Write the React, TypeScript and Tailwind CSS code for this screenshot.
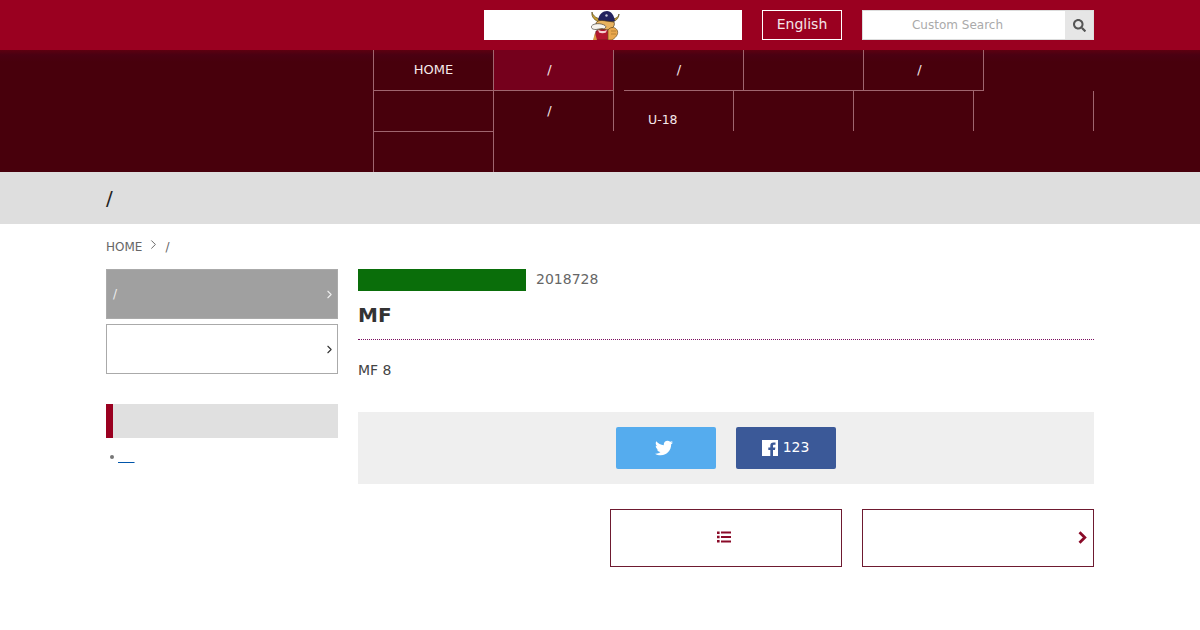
import { FaSearch, FaTwitter } from "react-icons/fa";
import { ChevronRight } from "lucide-react";

function Mascot() {
  return (
    <svg width="29" height="29" viewBox="0 0 29 29" className="block">
      <path d="M1 1 C2 5 6 8 11 8 L20 8 C24 8 27 7 28 3 C28 6 26 10 21 11 L9 11 C4 10 0 6 1 1Z" fill="#c9a233" stroke="#5a4a1a" strokeWidth="0.7" />
      <path d="M7 9 C8 3 12 0 16 0 C20 0 23 4 24 10 C19 12 12 12 7 9Z" fill="#23235f" />
      <circle cx="15.5" cy="4.5" r="1.2" fill="#c8c8d8" />
      <path d="M5 13 C5 9 11 9 15 10 L23 11 C24 13 23 16 21 17 L16 19 L8 19 C5 18 4 15 5 13Z" fill="#e9b35f" stroke="#4a3518" strokeWidth="0.7" />
      <path d="M0.5 15 C3 12 10 12 14 14.5 C16 16 14 18.5 11 17.5 L5 18.5 C1 18.5 0 17 0.5 15Z" fill="#f7f4ee" stroke="#45403a" strokeWidth="0.7" />
      <path d="M3 29 L5 20 C9 18 15 18 18 20 L18 29Z" fill="#b3172f" stroke="#4a1a18" strokeWidth="0.5" />
      <path d="M7 18.5 C10 20.5 14 20.5 16 18.5 L15 21.5 C13 22.5 10 22.5 8 21.5Z" fill="#f6d0d0" />
      <path d="M17 19 C20 15 25 16 26.5 20 C27.5 24 24 27 21 29 L17 29Z" fill="#eaa94e" stroke="#6a4a1a" strokeWidth="0.7" />
      <path d="M20 20 L25 20 M20 23 L25 23" stroke="#a8742c" strokeWidth="0.7" />
      <path d="M2 29 L4 22 L6 29Z" fill="#d99a45" />
    </svg>
  );
}

const line = "border-[#a0656f]";

export default function App() {
  return (
    <div className="min-h-[630px] bg-white text-[14px] text-[#333] font-['DejaVu_Sans',sans-serif]">
      <header className="flex h-[50px] items-center justify-end gap-5 bg-[#9a0020] pr-[106px]">
        <div className="flex h-[30px] w-[258px] justify-center bg-white">
          <div className="mr-[15px] mt-[1px]"><Mascot /></div>
        </div>
        <div className="flex h-[30px] w-20 items-center justify-center border border-white pb-[2px] text-[14px] text-[#f5e5e8]">English</div>
        <div className="flex h-[30px] w-[232px] border border-[#dddddd] bg-white">
          <div className="flex-1 pr-[13px] text-center text-[12px] leading-[28px] text-[#aaaaaa]">Custom Search</div>
          <div className="flex w-[28px] items-center justify-center bg-[#e6e6e6] text-[#555555]">
            <FaSearch size={13} />
          </div>
        </div>
      </header>

      <nav className="h-[122px] bg-[linear-gradient(#5c0010_0,#4a0012_5px,#48000c_12px)] pl-[373px] text-[13px] text-[#f5e9eb]">
        <div className="flex h-[41px]">
          <div className={`w-[120px] border-b border-l ${line} text-center leading-[39px]`}>HOME</div>
          <div className={`w-[120px] border-b border-l ${line} bg-[#75001c] pr-2 text-center leading-[39px]`}>/</div>
          <div className={`w-[130px] border-l ${line} pl-[10px]`}>
            <div className={`h-[41px] border-b ${line} pr-[9px] text-center leading-[39px]`}>/</div>
          </div>
          <div className={`w-[120px] border-b border-l ${line}`} />
          <div className={`w-[121px] border-r border-b border-l ${line} pr-2 text-center leading-[39px]`}>/</div>
        </div>
        <div className="flex h-[40px]">
          <div className={`w-[120px] border-l ${line}`} />
          <div className={`w-[120px] border-l ${line} pr-2 text-center leading-[40px]`}>/</div>
          <div className={`w-[120px] border-l ${line} pl-[34px] pt-[21px] text-[12.5px] leading-[15px]`}>U-18</div>
          <div className={`w-[120px] border-l ${line}`} />
          <div className={`w-[120px] border-l ${line}`} />
          <div className={`w-[121px] border-r border-l ${line}`} />
        </div>
        <div className={`h-[41px] w-[121px] border-t border-r border-l ${line}`} />
      </nav>

      <div className="flex h-[52px] items-center bg-[#dedede] pl-[106px] text-[20px] text-[#222222]">/</div>

      <div className="flex h-[45px] items-center gap-[4px] pt-[1px] pl-[106px] text-[12px] text-[#666666]">
        <span>HOME</span>
        <ChevronRight size={15} strokeWidth={1.4} className="mb-[5px] text-[#555555]" />
        <span>/</span>
      </div>

      <div className="flex gap-5 px-[106px]">
        <aside className="w-[232px]">
          <div className="flex h-[50px] items-center justify-between border border-[#aaaaaa] bg-[#a0a0a0] pr-[1px] pl-[6px] text-[12px] text-[#eeeeee]">
            <span>/</span>
            <ChevronRight size={13} strokeWidth={2} />
          </div>
          <div className="mt-[5px] flex h-[50px] items-center justify-end border border-[#aaaaaa] pr-[1px] text-[#333333]">
            <ChevronRight size={13} strokeWidth={2} />
          </div>
          <div className="mt-[30px] h-[34px] border-l-[7px] border-[#9a0020] bg-[#e0e0e0]" />
          <ul className="mt-[10px] flex items-center pl-[4px] text-[12px]">
            <li className="mr-[4px] h-1 w-1 rounded-full bg-[#777777]" />
            <li>
              <a className="block text-[13px] leading-[17px] text-[#0055aa] underline underline-offset-[1px]">{"\u00a0\u00a0\u00a0\u00a0"}</a>
            </li>
          </ul>
        </aside>

        <main className="w-[736px]">
          <div className="flex h-[22px] items-center gap-[10px]">
            <div className="h-[22px] w-[168px] bg-[#0a6e0a]" />
            <span className="mb-[2px] text-[14px] text-[#666666]">2018728</span>
          </div>
          <h1 className="mt-[9px] h-[40px] border-b border-dotted border-[#7a1060] text-[20px] leading-[30px] font-bold text-[#333333]">MF</h1>
          <p className="mt-[20px] h-[20px] text-[14px] leading-[20px] text-[#444444]">MF 8</p>
          <div className="mt-[32px] flex h-[72px] items-center justify-center gap-5 bg-[#efefef]">
            <div className="flex h-[42px] w-[100px] items-center justify-center rounded-[2px] bg-[#55acee] text-white">
              <FaTwitter size={18} className="mr-1" />
            </div>
            <div className="flex h-[42px] w-[100px] items-center justify-center gap-[5px] rounded-[2px] bg-[#3b5998] text-[14px] text-white">
              <svg width="16" height="16" viewBox="0 0 16 16" fill="currentColor" className="ml-[-1px]">
                <path d="M0 0H16V16H11V10H13L13.4 7.5H11V6C11 5.2 11.3 4.8 12.2 4.8H13.5V2.5H11.5C9.4 2.5 8.3 3.7 8.3 5.7V7.5H6.3V10H8.3V16H0Z" />
              </svg>
              <span className="mb-[2px]">123</span>
            </div>
          </div>
          <div className="mt-[25px] flex justify-end gap-5">
            <div className="flex h-[58px] w-[232px] items-center justify-center border border-[#6e1a30] pb-[2px] text-[#8a0a28]">
              <svg width="14" height="12" viewBox="0 0 14 12" fill="currentColor" className="mr-1">
                <path d="M0 .5H2.6V3H0ZM0 4.7H2.6V7.3H0ZM0 9H2.6V11.5H0ZM4 .6H14V2.4H4ZM4 5.1H14V6.9H4ZM4 9.6H14V11.4H4Z" />
              </svg>
            </div>
            <div className="flex h-[58px] w-[232px] items-center justify-end border border-[#6e1a30] pr-[6px] pb-[1px] text-[#8a0a28]">
              <svg width="9" height="13" viewBox="0 0 9 13" fill="none" stroke="currentColor" strokeWidth="2.8">
                <path d="M1.5 1.2L6.8 6.5L1.5 11.8" />
              </svg>
            </div>
          </div>
        </main>
      </div>
    </div>
  );
}
